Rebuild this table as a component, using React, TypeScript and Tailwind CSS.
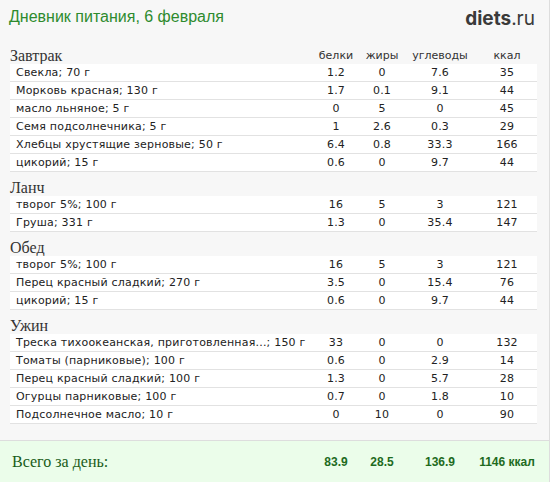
import React from "react";

type Item = [string, string, string, string, string];
type Section = { title: string; items: Item[] };

const sections: Section[] = [
  {
    title: "Завтрак",
    items: [
      ["Свекла; 70 г", "1.2", "0", "7.6", "35"],
      ["Морковь красная; 130 г", "1.7", "0.1", "9.1", "44"],
      ["масло льняное; 5 г", "0", "5", "0", "45"],
      ["Семя подсолнечника; 5 г", "1", "2.6", "0.3", "29"],
      ["Хлебцы хрустящие зерновые; 50 г", "6.4", "0.8", "33.3", "166"],
      ["цикорий; 15 г", "0.6", "0", "9.7", "44"],
    ],
  },
  {
    title: "Ланч",
    items: [
      ["творог 5%; 100 г", "16", "5", "3", "121"],
      ["Груша; 331 г", "1.3", "0", "35.4", "147"],
    ],
  },
  {
    title: "Обед",
    items: [
      ["творог 5%; 100 г", "16", "5", "3", "121"],
      ["Перец красный сладкий; 270 г", "3.5", "0", "15.4", "76"],
      ["цикорий; 15 г", "0.6", "0", "9.7", "44"],
    ],
  },
  {
    title: "Ужин",
    items: [
      ["Треска тихоокеанская, приготовленная...; 150 г", "33", "0", "0", "132"],
      ["Томаты (парниковые); 100 г", "0.6", "0", "2.9", "14"],
      ["Перец красный сладкий; 100 г", "1.3", "0", "5.7", "28"],
      ["Огурцы парниковые; 100 г", "0.7", "0", "1.8", "10"],
      ["Подсолнечное масло; 10 г", "0", "10", "0", "90"],
    ],
  },
];

const grid = "grid grid-cols-[minmax(0,1fr)_50px_42px_74px_60px]";

export default function App() {
  return (
    <div className="w-[550px] h-[482px] bg-[#f7f7f7] border-r border-[#dddddd] flex flex-col text-[#222]">
      <div className="h-[40px] flex items-start justify-between pl-[9px] pr-[14px] pt-[7px]">
        <div className="text-[16px] leading-[20px] text-[#2e8b2e] font-['Liberation_Sans',sans-serif]">
          Дневник питания, 6 февраля
        </div>
        <div className="text-[19px] leading-[22px] text-[#3a3a3a] font-['Inter',sans-serif] pt-[1px]">
          <span className="font-bold">diets</span>
          <span className="font-normal">.ru</span>
        </div>
      </div>
      <div className="pl-[10px] pr-[12px] flex flex-col">
        {sections.map((s, si) => (
          <div key={si} className="flex flex-col">
            <div className={`${grid} h-[24px] items-end`}>
              <div className="font-['Liberation_Serif',serif] text-[16px] leading-[16px] text-[#333]">
                {s.title}
              </div>
              {si === 0 &&
                ["белки", "жиры", "углеводы", "ккал"].map((h) => (
                  <div
                    key={h}
                    className="text-center text-[11px] leading-[16px] text-[#333] font-['DejaVu_Sans',sans-serif]"
                  >
                    {h}
                  </div>
                ))}
            </div>
            {s.items.map((it, i) => (
              <div
                key={i}
                className={`${grid} h-[18px] items-center bg-white border-b border-[#e2e2e2] text-[11px] leading-[17px] font-['DejaVu_Sans',sans-serif] tracking-[0.2px] text-[#222]`}
              >
                <div className="pl-[6px] whitespace-nowrap">{it[0]}</div>
                <div className="text-center">{it[1]}</div>
                <div className="text-center">{it[2]}</div>
                <div className="text-center">{it[3]}</div>
                <div className="text-center">{it[4]}</div>
              </div>
            ))}
          </div>
        ))}
      </div>
      <div className="mt-auto h-[42px] bg-[#ebfdea] border-t border-[#dddddd] pl-[10px] pr-[12px]">
        <div className={`${grid} h-full items-center`}>
          <div className="font-['Liberation_Serif',serif] text-[16px] text-[#185c18] pl-[2px]">Всего за день:</div>
          <div className="text-center font-['Liberation_Sans',sans-serif] font-bold text-[12px] text-[#1e6b1e]">83.9</div>
          <div className="text-center font-['Liberation_Sans',sans-serif] font-bold text-[12px] text-[#1e6b1e]">28.5</div>
          <div className="text-center font-['Liberation_Sans',sans-serif] font-bold text-[12px] text-[#1e6b1e]">136.9</div>
          <div className="text-center font-['Liberation_Sans',sans-serif] font-bold text-[12px] text-[#1e6b1e]">1146 ккал</div>
        </div>
      </div>
    </div>
  );
}
